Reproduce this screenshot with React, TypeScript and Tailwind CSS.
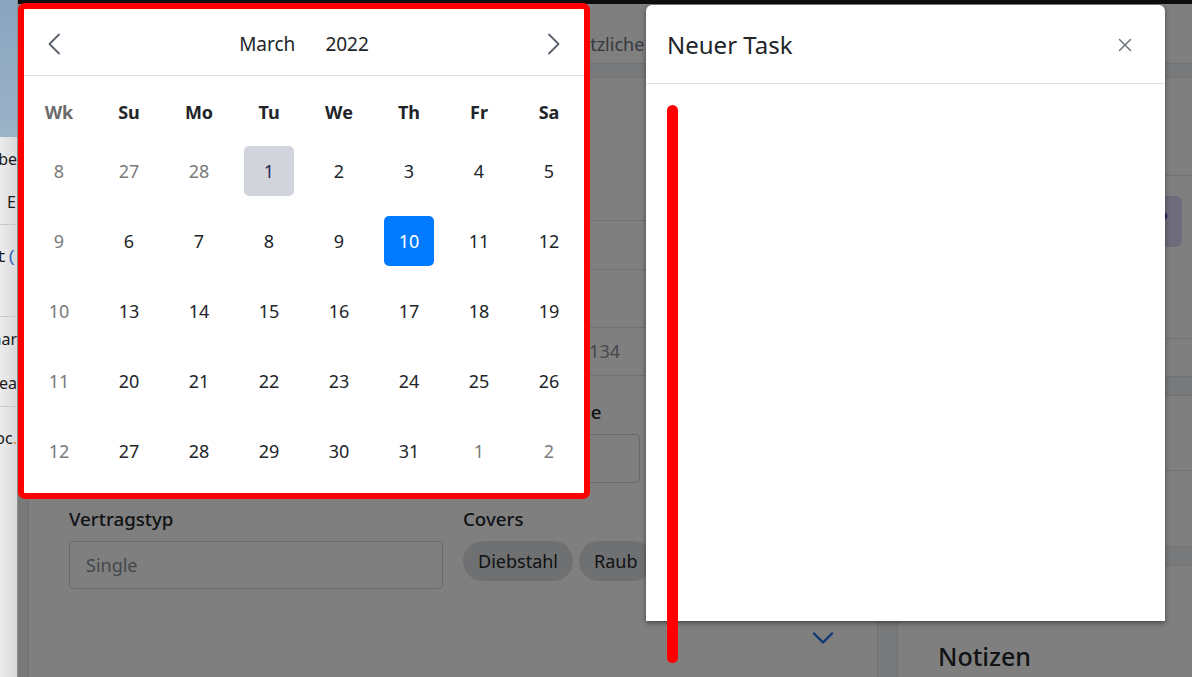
import { ChevronDown, X, Pencil } from "lucide-react";

type Day = { n: number; inMonth: boolean };

const weeks: { wk: number; days: Day[] }[] = [
  { wk: 8, days: [27, 28, 1, 2, 3, 4, 5].map((n, i) => ({ n, inMonth: i > 1 })) },
  { wk: 9, days: [6, 7, 8, 9, 10, 11, 12].map((n) => ({ n, inMonth: true })) },
  { wk: 10, days: [13, 14, 15, 16, 17, 18, 19].map((n) => ({ n, inMonth: true })) },
  { wk: 11, days: [20, 21, 22, 23, 24, 25, 26].map((n) => ({ n, inMonth: true })) },
  { wk: 12, days: [27, 28, 29, 30, 31, 1, 2].map((n, i) => ({ n, inMonth: i < 5 })) },
];

const weekdays = ["Su", "Mo", "Tu", "We", "Th", "Fr", "Sa"];

function Arrow({ dir }: { dir: "left" | "right" }) {
  return (
    <svg width="14" height="22" viewBox="0 0 14 22" fill="none" className="text-[#56606a]">
      <path
        d={dir === "left" ? "M12 1.5 L2.5 11 L12 20.5" : "M2 1.5 L11.5 11 L2 20.5"}
        stroke="currentColor"
        strokeWidth="1.8"
        strokeLinecap="round"
        strokeLinejoin="round"
      />
    </svg>
  );
}

function DayCell({ day }: { day: Day }) {
  let cls = "text-[#212529]";
  if (!day.inMonth) cls = "text-[#7a7a7a]";
  else if (day.n === 1) cls = "bg-[#d1d5db] text-[#1f2a55]";
  else if (day.n === 10) cls = "bg-[#007bff] text-white";
  return (
    <div className="flex h-[70px] items-center justify-center">
      <div className={`flex h-[50px] w-[50px] items-center justify-center rounded-[5px] ${cls}`}>
        {day.n}
      </div>
    </div>
  );
}

function Calendar() {
  return (
    <div className="absolute left-0 top-[3px] h-[496px] w-[572px] rounded-[7px] border-[6px] border-[#ff0000] bg-white text-[18px]">
      <div className="flex h-[67px] items-center justify-between border-b border-[#dee2e6] px-[23px] pt-[4px]">
        <Arrow dir="left" />
        <div className="flex gap-[30px] text-[19px] text-[#212529]">
          <span>March</span>
          <span>2022</span>
        </div>
        <Arrow dir="right" />
      </div>
      <div className="pt-[11px]">
        <div className="grid h-[49px] grid-cols-8 items-center pt-[2px] text-center font-bold">
          <span className="text-[#6b6b6b]">Wk</span>
          {weekdays.map((d) => (
            <span key={d} className="text-[#212529]">
              {d}
            </span>
          ))}
        </div>
        {weeks.map((w) => (
          <div key={w.wk} className="grid grid-cols-8">
            <div className="flex h-[70px] items-center justify-center text-[#7a7a7a]">{w.wk}</div>
            {w.days.map((d, i) => (
              <DayCell key={i} day={d} />
            ))}
          </div>
        ))}
      </div>
    </div>
  );
}

function TaskModal() {
  return (
    <div className="absolute left-[628px] top-[5px] flex h-[616px] w-[519px] flex-col rounded-t-[6px] bg-white shadow-[0_2px_5px_rgba(0,0,0,0.45)]">
      <div className="flex h-[79px] items-center justify-between border-b border-[#dee2e6] pl-[21px] pr-[29px] pt-[1px]">
        <span className="text-[24px] text-[#212529]">Neuer Task</span>
        <X size={22} strokeWidth={1.6} className="text-[#6c757d]" />
      </div>
      <div className="flex-1" />
    </div>
  );
}

function LeftWindow() {
  return (
    <div className="flex w-[18px] shrink-0 flex-col border-r border-[#8d8d8d] bg-gradient-to-r from-[#ececec] to-[#d9d9d9] text-[16px] text-[#1a1a1a]">
      <div className="h-[137px] bg-gradient-to-b from-[#88a5bf] to-[#9cb3c8]" />
      <div className="flex h-[43px] items-center justify-end overflow-hidden whitespace-nowrap">Abbe</div>
      <div className="flex h-[45px] items-center justify-end overflow-hidden whitespace-nowrap border-b border-[#c9c9c9] pr-[1px]">
        E
      </div>
      <div className="flex h-[92px] items-start justify-end overflow-hidden whitespace-nowrap border-b border-[#c9c9c9] pt-[20px] font-['Liberation_Mono',monospace] text-[17px]">
        print<span className="text-[#1f5fbf]">(</span>
      </div>
      <div className="flex h-[43px] items-center justify-end overflow-hidden whitespace-nowrap">Gemar</div>
      <div className="flex h-[47px] items-center justify-end overflow-hidden whitespace-nowrap border-b border-[#c9c9c9]">
        Crea
      </div>
      <div className="flex h-[62px] items-center justify-end overflow-hidden whitespace-nowrap">
        Doc<span className="text-[#d98a2b]">.</span>
      </div>
      <div className="flex-1" />
    </div>
  );
}

function Label({ children }: { children: React.ReactNode }) {
  return <div className="mb-[10px] h-[24px] whitespace-nowrap text-[18.7px] font-medium leading-[24px] text-[#212529]">{children}</div>;
}

function Input({ placeholder, h }: { placeholder: string; h: string }) {
  return (
    <div className={`flex ${h} items-center rounded-[4px] border border-[#ced4da] px-[16px] text-[18px] text-[#8a9097]`}>
      {placeholder}
    </div>
  );
}

function LeftCard() {
  return (
    <div className="h-[620px] w-[850px] shrink-0 border border-[#dee2e6] bg-white">
      <div className="h-[143px] border-b border-[#dee2e6] px-[40px] pt-[30px] text-[22px] font-medium text-[#212529]">
        Vertragsdetails
      </div>
      <div className="flex h-[49px] items-center border-b border-[#dee2e6] px-[40px] text-[17px] text-[#495057]">
        Versicherer
      </div>
      <div className="flex h-[58px] items-center border-b border-[#dee2e6] px-[40px] text-[17px] text-[#495057]">
        Produkt
      </div>
      <div className="grid h-[48px] grid-cols-4 items-center gap-x-[20px] border-b border-[#dee2e6] px-[40px] text-[18px]">
        <span className="text-[#495057]">Prämie</span>
        <span />
        <span className="pr-[20px] text-right text-[#8a9097]">CHF 1134</span>
        <span />
      </div>
      <div className="grid grid-cols-4 gap-x-[20px] gap-y-[24px] px-[40px] pt-[24px]">
        <div className="col-span-2">
          <Label>Policennummer</Label>
          <Input placeholder="" h="h-[49px]" />
        </div>
        <div>
          <Label>Risikokategorie</Label>
          <Input placeholder="" h="h-[49px]" />
        </div>
        <div>
          <Label>Status</Label>
          <Input placeholder="" h="h-[49px]" />
        </div>
        <div className="col-span-2">
          <Label>Vertragstyp</Label>
          <Input placeholder="Single" h="h-[48px]" />
        </div>
        <div className="col-span-2">
          <Label>Covers</Label>
          <div className="flex gap-[6px]">
            {["Diebstahl", "Raub", "Feuer", "Wasser"].map((c) => (
              <span key={c} className="flex h-[40px] items-center rounded-full bg-[#dfe1e4] px-[15px] text-[18px] text-[#212529]">
                {c}
              </span>
            ))}
          </div>
        </div>
      </div>
      <div className="mt-[31px] flex justify-end pr-[36px]">
        <ChevronDown size={36} strokeWidth={1.6} className="text-[#1f6fe5]" />
      </div>
    </div>
  );
}

function RightColumn() {
  return (
    <div className="flex w-[305px] shrink-0 flex-col gap-[18px]">
      <div className="flex h-[300px] flex-col border border-[#dee2e6] bg-white">
        <div className="h-[98px] border-b border-[#dee2e6]" />
        <div className="flex h-[163px] justify-end border-b border-[#dee2e6] pr-[19px] pt-[20px]">
          <div className="flex h-[51px] w-[48px] items-center justify-center rounded-[6px] bg-[#dcd6f7]">
            <Pencil size={20} strokeWidth={2} className="text-[#5b21b6]" />
          </div>
        </div>
        <div className="flex-1" />
      </div>
      <div className="h-[152px] border border-[#dee2e6] bg-white">
        <div className="h-[75px] border-b border-[#dee2e6]" />
      </div>
      <div className="h-[200px] border border-[#dee2e6] bg-white pl-[40px] pt-[74px]">
        <div className="text-[25px] font-medium leading-[32px] text-[#212529]">Notizen</div>
      </div>
    </div>
  );
}

export default function App() {
  return (
    <div className="flex h-[677px] w-[1192px] overflow-hidden font-['Noto_Sans',sans-serif]">
      <LeftWindow />
      <div className="relative flex-1 overflow-hidden bg-[#f1f3f5]">
        <div className="h-[4px] bg-[#1c1c1c]" />
        <div className="flex h-[60px] items-center border-b border-[#dee2e6] bg-white pl-[10px] pt-[22px] text-[18px] text-[#6c757d]">
          {["Übersicht", "Dokumente", "Schäden", "Zusätzliche Infos"].map((t) => (
            <span key={t} className="w-[174px] shrink-0 whitespace-nowrap">
              {t}
            </span>
          ))}
        </div>
        <div className="flex gap-[19px] pl-[10px] pt-[13px]">
          <LeftCard />
          <RightColumn />
        </div>

        {/* backdrop */}
        <div className="absolute inset-0 bg-black/50" />

        <Calendar />
        <TaskModal />

        {/* marker */}
        <div className="absolute left-[649px] top-[105px] h-[558px] w-[11px] rounded-full bg-[#ff0000]" />
      </div>
    </div>
  );
}
